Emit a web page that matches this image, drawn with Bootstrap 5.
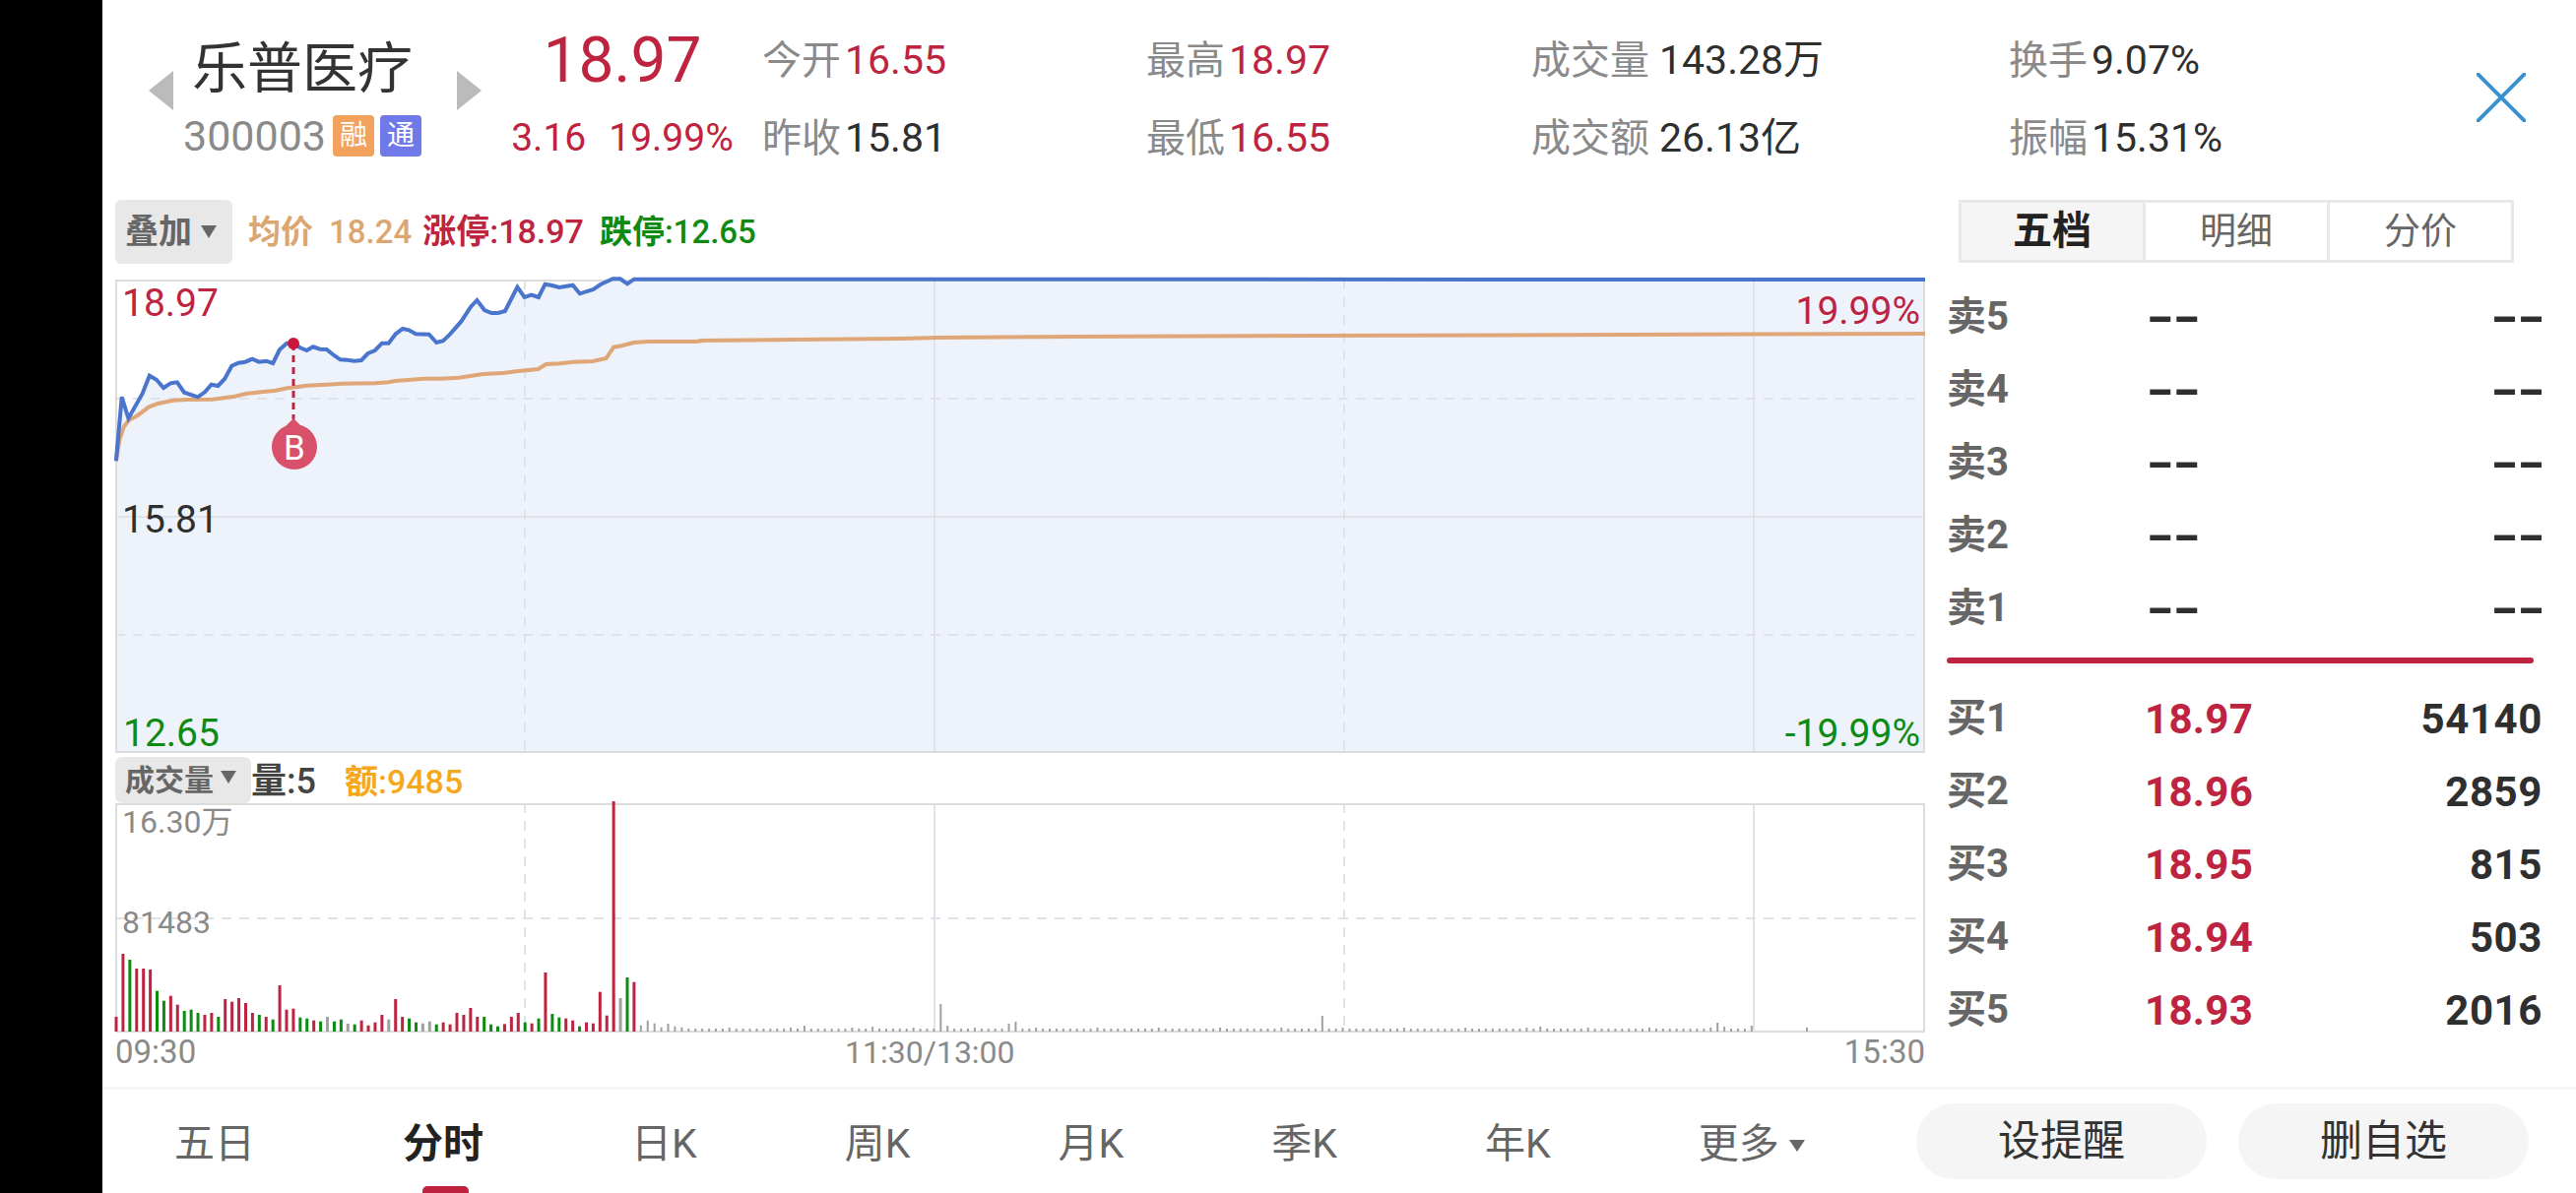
<!DOCTYPE html>
<html lang="zh">
<head>
<meta charset="UTF-8">
<title>乐普医疗</title>
<link href="https://cdn.jsdelivr.net/npm/bootstrap@5.3.2/dist/css/bootstrap.min.css" rel="stylesheet">
<script src="https://cdn.jsdelivr.net/npm/bootstrap@5.3.2/dist/js/bootstrap.bundle.min.js"></script>
<style>
html,body{height:1212px;overflow:hidden}
body{background:#000;font-family:Roboto,"Noto Sans CJK SC",sans-serif;color:#333}
.side-black{width:104px;flex:none}
.main-pane{width:2512px;height:1212px;background:#fff;flex:none}
.c-red{color:#be2340}.c-green{color:#0f8a12}.c-gray{color:#8a8a8a}.c-dark{color:#2f2f2f}.c-tan{color:#dca670}.c-amber{color:#f5a81c}
.cn-b{font-weight:700}

.top-head{height:203px;padding:19px 0 0 47px}
.name-wrap{width:338px}
.arrow-l,.arrow-r{width:0;height:0;border-top:20px solid transparent;border-bottom:20px solid transparent;margin-top:3px}
.arrow-l{border-right:25px solid #bbb}
.arrow-r{border-left:25px solid #bbb}
.name-mid{width:288px;padding-right:26px}
.stock-name{font-size:56px;line-height:70px;margin-top:16px;color:#333;white-space:nowrap}
.stock-code{font-size:43px;line-height:48px;margin-top:9px;color:#8a8a8a}
.tag-box{width:42px;height:42px;border-radius:4px;color:#fff;font-size:28px;line-height:42px;text-align:center;font-weight:400;margin-left:6px}
.tag-box:first-of-type{margin-left:7px}
.tag-rong{background:#f2a25c}.tag-tong{background:#6f7ae8}
.price-wrap{width:244px;margin:0 20px 0 21px;padding-top:3px;text-align:center;white-space:nowrap}
.price-big{font-size:64px;line-height:79px}
.price-sub{font-size:39px;line-height:79px}
.price-sub span+span{margin-left:23px}
.stat-grid{display:grid;grid-template-columns:390px 391px 485px 475px;grid-auto-rows:79px;padding-top:3px;font-size:41px;line-height:79px;white-space:nowrap}
.stat-name{color:#8a8a8a;margin-right:4px;font-size:40px}
.stat-wide{margin-right:10px}
.close-x{margin-top:55px;width:50px;height:50px}

.chart-col{width:1838px;margin-left:13px}
.tool-row{height:65px;font-size:33px;white-space:nowrap}
.drop-btn{background:#e8e8e8;border-radius:6px;color:#666;font-weight:700;font-size:34px;height:65px;width:119px;padding-left:10px}
.tri-down{width:0;height:0;border-left:8px solid transparent;border-right:8px solid transparent;border-top:13px solid #666;display:inline-block;margin-left:9px}
.limit-up{font-size:34px;margin-left:11px}
.chart-box{height:481px;margin-top:16px}
.chart-box svg,.vol-box svg{display:block;overflow:visible;position:absolute;left:0;top:0}
.chart-tag{font-size:39px;line-height:1;white-space:nowrap}
.vol-head{height:47px;margin-top:4px;padding-top:3px;font-size:34px;white-space:nowrap}
.vol-btn{background:#e8e8e8;border-radius:7px;width:138px;height:47px;margin-top:-3px;color:#666;font-weight:700;font-size:30px;padding-left:10px}
.vol-btn .tri-down{margin-left:7px;margin-bottom:6px}
.vol-now{color:#444;font-size:36px;line-height:1}
.vol-amt{margin-left:29px}
.vol-box{height:233px}
.vol-tag{font-size:32px;line-height:1;color:#8a8a8a;white-space:nowrap}
.axis-row{height:55px;font-size:33px;line-height:40px;color:#8a8a8a;position:relative}
.axis-mid{position:absolute;left:741px;top:0;font-size:32px}

.quote-col{width:605px;margin-left:22px}
.tab-wrap{height:64px;margin-left:12px;width:564px;border:3px solid #e8e8e8;font-size:37px;padding-top:0}
.tab-cell{flex:1;color:#666;border-left:3px solid #e8e8e8;line-height:1}
.tab-cell:first-child{border-left:0;background:#f5f5f5;color:#222;font-weight:700;font-size:40px}
.quote-list{margin-top:18px}
.quote-row{height:74px;font-size:42px;font-weight:700;color:#2f2f2f}
.q-name{width:201px;color:#666;font-size:40px}
.q-price{color:#be2340;letter-spacing:.3px}
.q-vol{letter-spacing:.6px}
.dash-l,.dash-r{display:inline-block;font-weight:900;letter-spacing:-3px;transform:scaleX(1.7)}
.dash-l{transform-origin:left center}
.dash-r{transform-origin:right center}
.red-rule{height:38px;margin-top:-3px;margin-bottom:3px}
.red-rule div{height:6px;background:#be2340;border-radius:3px;width:596px}

.bottom-bar{height:108px;border-top:3px solid #f5f5f5;padding:7px 48px 0 73px;position:relative;font-size:41px;color:#666;white-space:nowrap}
.kline-tabs{gap:150px}
.kline-on{color:#222;font-weight:700;position:relative}
.kline-on::after{content:"";position:absolute;left:20px;top:73px;width:47px;height:8px;background:#be2340;border-radius:5px 5px 0 0}
.more-tri{display:inline-block;width:0;height:0;border-left:8px solid transparent;border-right:8px solid transparent;border-top:12px solid #666;margin-left:10px;margin-bottom:6px}
.pill-btn{width:295px;height:77px;background:#f5f5f5;border:0;color:#333;font-size:43px;line-height:1;padding:0;margin-top:-7px}
.pill-gap{gap:32px}
</style>
</head>
<body class="d-flex">
<div class="side-black"></div>
<div class="main-pane d-flex flex-column">

  <div class="top-head d-flex align-items-start">
    <div class="name-wrap d-flex align-items-center">
      <div class="arrow-l"></div>
      <div class="name-mid d-flex flex-column align-items-center">
        <div class="stock-name">乐普医疗</div>
        <div class="stock-code d-flex align-items-center">300003<span class="tag-box tag-rong">融</span><span class="tag-box tag-tong">通</span></div>
      </div>
      <div class="arrow-r"></div>
    </div>
    <div class="price-wrap c-red">
      <div class="price-big">18.97</div>
      <div class="price-sub"><span>3.16</span><span>19.99%</span></div>
    </div>
    <div class="stat-grid">
      <div><span class="stat-name">今开</span><span class="c-red">16.55</span></div>
      <div><span class="stat-name">最高</span><span class="c-red">18.97</span></div>
      <div><span class="stat-name stat-wide">成交量</span><span class="c-dark">143.28万</span></div>
      <div><span class="stat-name">换手</span><span class="c-dark">9.07%</span></div>
      <div><span class="stat-name">昨收</span><span class="c-dark">15.81</span></div>
      <div><span class="stat-name">最低</span><span class="c-red">16.55</span></div>
      <div><span class="stat-name stat-wide">成交额</span><span class="c-dark">26.13亿</span></div>
      <div><span class="stat-name">振幅</span><span class="c-dark">15.31%</span></div>
    </div>
    <svg class="close-x" viewBox="0 0 50 50"><path d="M1 1L49 49M49 1L1 49" stroke="#3a91d0" stroke-width="4" fill="none" stroke-linecap="round"/></svg>
  </div>

  <div class="d-flex flex-grow-1">
    <div class="chart-col">
      <div class="tool-row d-flex align-items-center">
        <div class="drop-btn d-flex align-items-center">叠加<span class="tri-down"></span></div>
        <div class="c-tan fw-medium ms-3"><span class="cn-b">均价</span><span class="ms-3">18.24</span></div>
        <div class="c-red fw-medium limit-up"><span class="cn-b">涨停</span>:18.97</div>
        <div class="c-green fw-medium ms-3"><span class="cn-b">跌停</span>:12.65</div>
      </div>
      <div class="chart-box position-relative">
        <svg id="priceChart" width="1838" height="481" viewBox="0 0 1838 481"></svg>
        <span class="chart-tag c-red position-absolute" style="left:7px;top:5px">18.97</span>
        <span class="chart-tag c-red position-absolute" style="right:5px;top:13px">19.99%</span>
        <span class="chart-tag c-dark position-absolute" style="left:7px;top:225px">15.81</span>
        <span class="chart-tag c-green position-absolute" style="left:8px;bottom:0">12.65</span>
        <span class="chart-tag c-green position-absolute" style="right:5px;bottom:0">-19.99%</span>
      </div>
      <div class="vol-head d-flex align-items-center">
        <div class="vol-btn d-flex align-items-center">成交量<span class="tri-down"></span></div>
        <div class="fw-medium vol-now"><span class="cn-b">量</span>:5</div>
        <div class="c-amber fw-medium vol-amt"><span class="cn-b">额</span>:9485</div>
      </div>
      <div class="vol-box position-relative">
        <svg id="volChart" width="1838" height="233" viewBox="0 0 1838 233"></svg>
        <span class="vol-tag position-absolute" style="left:7px;top:3px">16.30万</span>
        <span class="vol-tag position-absolute" style="left:7px;top:105px">81483</span>
      </div>
      <div class="axis-row d-flex justify-content-between">
        <span>09:30</span><span class="axis-mid">11:30/13:00</span><span>15:30</span>
      </div>
    </div>

    <div class="quote-col">
      <div class="tab-wrap d-flex">
        <div class="tab-cell d-flex align-items-center justify-content-center">五档</div>
        <div class="tab-cell d-flex align-items-center justify-content-center">明细</div>
        <div class="tab-cell d-flex align-items-center justify-content-center">分价</div>
      </div>
      <div class="quote-list">
        <div class="quote-row d-flex align-items-center"><span class="q-name">卖5</span><span class="dash-l">--</span><span class="dash-r ms-auto">--</span></div>
        <div class="quote-row d-flex align-items-center"><span class="q-name">卖4</span><span class="dash-l">--</span><span class="dash-r ms-auto">--</span></div>
        <div class="quote-row d-flex align-items-center"><span class="q-name">卖3</span><span class="dash-l">--</span><span class="dash-r ms-auto">--</span></div>
        <div class="quote-row d-flex align-items-center"><span class="q-name">卖2</span><span class="dash-l">--</span><span class="dash-r ms-auto">--</span></div>
        <div class="quote-row d-flex align-items-center"><span class="q-name">卖1</span><span class="dash-l">--</span><span class="dash-r ms-auto">--</span></div>
        <div class="red-rule d-flex align-items-center"><div></div></div>
        <div class="quote-row d-flex align-items-center"><span class="q-name">买1</span><span class="q-price">18.97</span><span class="ms-auto q-vol">54140</span></div>
        <div class="quote-row d-flex align-items-center"><span class="q-name">买2</span><span class="q-price">18.96</span><span class="ms-auto q-vol">2859</span></div>
        <div class="quote-row d-flex align-items-center"><span class="q-name">买3</span><span class="q-price">18.95</span><span class="ms-auto q-vol">815</span></div>
        <div class="quote-row d-flex align-items-center"><span class="q-name">买4</span><span class="q-price">18.94</span><span class="ms-auto q-vol">503</span></div>
        <div class="quote-row d-flex align-items-center"><span class="q-name">买5</span><span class="q-price">18.93</span><span class="ms-auto q-vol">2016</span></div>
      </div>
    </div>
  </div>

  <div class="bottom-bar d-flex align-items-center justify-content-between">
    <div class="kline-tabs d-flex">
      <span>五日</span><span class="kline-on">分时</span><span>日K</span><span>周K</span><span>月K</span><span>季K</span><span>年K</span><span>更多<i class="more-tri"></i></span>
    </div>
    <div class="pill-gap d-flex">
      <button class="btn pill-btn rounded-pill">设提醒</button>
      <button class="btn pill-btn rounded-pill">删自选</button>
    </div>
  </div>
</div>

<script>
// price line, x/y in chart pixels
const blue = [[40,595],[53,400],[68,465],[100,390],[116,335],[132,347],[148,372],[164,358],[179,355],[195,386],[226,400],[242,385],[257,362],[272,366],[287,345],[303,305],[318,296],[334,293],[350,284],[365,293],[381,290],[397,297],[412,256],[428,236],[443,236],[459,250],[474,258],[488,247],[504,254],[519,255],[535,272],[550,286],[566,287],[582,290],[598,288],[613,267],[629,258],[645,236],[660,236],[676,208],[692,192],[706,196],[722,208],[752,209],[769,234],[784,229],[800,208],[825,170],[847,125],[861,105],[878,135],[894,144],[909,144],[925,138],[953,65],[969,96],[985,89],[1001,96],[1016,56],[1032,60],[1048,66],[1079,59],[1095,85],[1126,72],[1142,57],[1170,40],[1187,40],[1203,55],[1218,41]]
  .map(p => [p[0] / 2.24 - 17, p[1] / 3 - 14]);
blue.push([1838, 0]);

const avg = [[40,595],[48,530],[58,490],[70,470],[90,455],[115,430],[135,420],[170,410],[200,408],[260,407],[310,398],[335,390],[380,383],[400,381],[430,373],[475,365],[520,362],[555,359],[630,358],[660,355],[675,351],[740,344],[780,344],[820,341],[875,330],[920,327],[955,321],[1000,315],[1018,300],[1050,298],[1080,293],[1125,291],[1155,282],[1172,248],[1190,244],[1218,234],[1250,231],[1360,231],[1375,228]]
  .map(p => [p[0] / 2.24 - 17, p[1] / 3 - 14]);
avg.push([593,62],[692,61],[798,60],[836,59],[976,58],[1225,57],[1838,55]);

const str = pts => pts.map(p => p[0].toFixed(1) + ',' + p[1].toFixed(1)).join(' ');
const grid = '#dfe2e8';
const vline = (x, h, dash) => `<line x1="${x}" x2="${x}" y1="0" y2="${h}" stroke="${grid}" stroke-width="2"${dash ? ' stroke-dasharray="10 8"' : ''}/>`;
const hline = (y, dash) => `<line x1="0" x2="1838" y1="${y}" y2="${y}" stroke="${grid}" stroke-width="2"${dash ? ' stroke-dasharray="10 8"' : ''}/>`;

document.getElementById('priceChart').innerHTML =
  `<rect x="1" y="1" width="1836" height="479" fill="#fff"/>` +
  `<polygon points="0,481 ${str(blue)} 1838,481" fill="#edf2fb"/>` +
  hline(121, true) + hline(241, false) + hline(361, true) +
  vline(416, 481, true) + vline(832, 481, false) + vline(1248, 481, true) + vline(1664, 481, false) +
  `<rect x="1" y="1" width="1836" height="479" fill="none" stroke="#dcdcdc" stroke-width="2"/>` +
  `<polyline points="${str(avg)}" fill="none" stroke="#dfa677" stroke-width="4"/>` +
  `<polyline points="${str(blue)}" fill="none" stroke="#4a75cc" stroke-width="4"/>` +
  `<line x1="181" x2="181" y1="65" y2="142" stroke="#be2340" stroke-width="3" stroke-dasharray="7 5"/>` +
  `<circle cx="181" cy="65" r="6" fill="#c8193c"/>` +
  `<circle cx="182" cy="170" r="23" fill="#d9506b"/><path d="M181 141 L172 150 H190 Z" fill="#d9506b"/>` +
  `<text x="182" y="183" text-anchor="middle" fill="#fff" font-size="35" font-family="Roboto,sans-serif">B</text>`;

// volume bars: [top read off the picture, colour]
const R = '#be2340', G = '#0f8a12', X = '#a0a0a0';
const bars = [[882,R],[690,R],[708,G],[735,R],[735,R],[738,R],[803,G],[833,G],[818,R],[845,R],[864,G],[860,G],[870,G],[876,R],[870,R],[882,G],[828,R],[836,R],[825,R],[840,R],[870,R],[876,G],[882,R],[890,G],[786,R],[860,R],[857,R],[884,G],[887,G],[893,R],[896,G],[882,X],[896,G],[890,G],[903,X],[905,G],[893,R],[908,R],[899,R],[876,R],[890,X],[828,R],[882,R],[887,G],[899,G],[902,X],[896,X],[905,G],[899,R],[905,R],[870,R],[876,R],[855,R],[882,R],[882,G],[905,G],[911,G],[904,R],[882,R],[870,R],[899,G],[902,R],[887,G],[747,R],[873,G],[884,G],[887,R],[893,R],[911,G],[899,R],[902,R],[806,R],[878,R],[225,R],[825,X],[762,G],[776,R],[908,X],[893,X],[902,X],[914,X],[903,X],[911,X],[914,X]];
const tall = {}; // quiet afternoon bars that stick out, by x
[[817,6],[886,5],[955,28],[963,6],[1024,8],[1032,10],[1343,16],[1565,5],[1745,9],[1752,5],[1781,6]].forEach(b => tall[b[0]] = b[1]);
let volSvg = hline(117, true) + vline(416, 233, true) + vline(832, 233, false) + vline(1248, 233, true) + vline(1664, 233, false) +
  `<rect x="1" y="1" width="1836" height="231" fill="none" stroke="#dcdcdc" stroke-width="2"/>`;
for (let i = 0; i < 241; i++) {
  const x = i * 6.92;
  let h, c = X;
  if (i < bars.length) { h = (927 - bars[i][0]) / 3; c = bars[i][1]; }
  else {
    h = i % 9 === 0 ? 4 : 3;
    for (const k in tall) if (Math.abs(k - 117 - x) < 3.5) h = tall[k];
  }
  volSvg += `<line x1="${x + 1}" x2="${x + 1}" y1="${232 - h}" y2="232" stroke="${c}" stroke-width="${i < 77 ? 3 : 2}"/>`;
}
volSvg += `<line x1="1718" x2="1718" y1="228" y2="232" stroke="${X}" stroke-width="2"/>`;
document.getElementById('volChart').innerHTML = volSvg;
</script>
</body>
</html>
